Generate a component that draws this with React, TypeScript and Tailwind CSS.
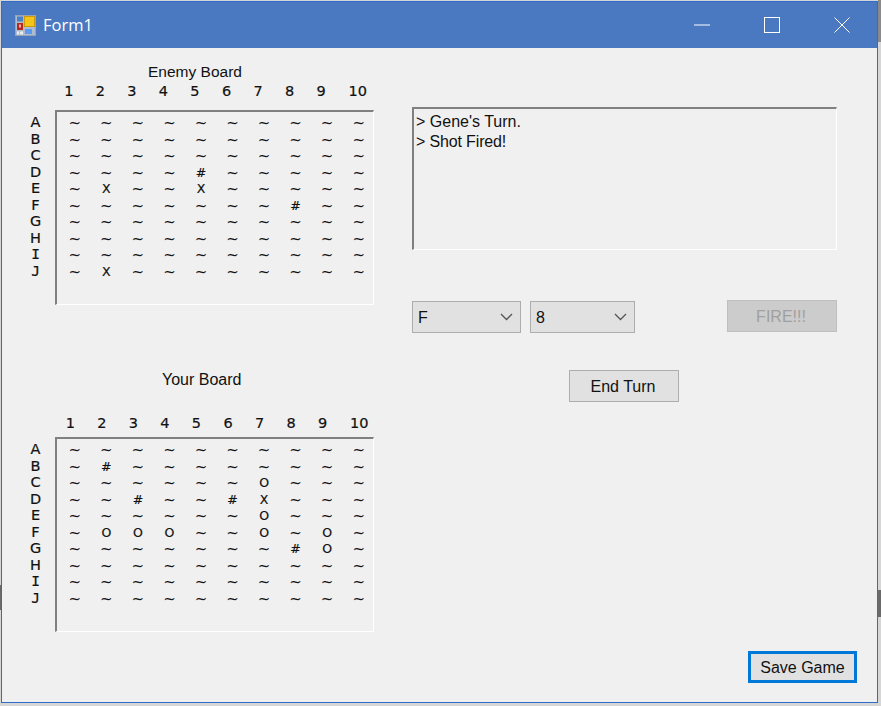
const sans = "font-['Liberation_Sans',Arial,sans-serif]";
const mono = "font-['DejaVu_Sans',Verdana,sans-serif]";
const dmono = "font-['DejaVu_Sans_Mono',monospace]";

const rowsLabels = ["A", "B", "C", "D", "E", "F", "G", "H", "I", "J"];
const colLabels = ["1", "2", "3", "4", "5", "6", "7", "8", "9", "10"];

const enemy = [
  "~~~~~~~~~~",
  "~~~~~~~~~~",
  "~~~~~~~~~~",
  "~~~~#~~~~~",
  "~X~~X~~~~~",
  "~~~~~~~#~~",
  "~~~~~~~~~~",
  "~~~~~~~~~~",
  "~~~~~~~~~~",
  "~X~~~~~~~~",
];
const yours = [
  "~~~~~~~~~~",
  "~#~~~~~~~~",
  "~~~~~~O~~~",
  "~~#~~#X~~~",
  "~~~~~~O~~~",
  "~OOO~~O~O~",
  "~~~~~~~#O~",
  "~~~~~~~~~~",
  "~~~~~~~~~~",
  "~~~~~~~~~~",
];

function Board({ data }: { data: string[] }) {
  return (
    <div className="flex">
      <div className="w-[53px] shrink-0 pt-[4px] text-[14.5px] text-[#111] [-webkit-text-stroke:0.2px_#111]">
        {rowsLabels.map((l) => (
          <div
            key={l}
            className={
              l === "I" || l === "J"
                ? `h-[16.5px] leading-[16.5px] text-center pl-[14px] ${dmono}`
                : `h-[16.5px] leading-[16.5px] text-center pl-[14px] ${mono}`
            }
          >
            {l}
          </div>
        ))}
      </div>
      <div className="w-[319px] h-[195px] border-t-2 border-l-2 border-t-[#808080] border-l-[#808080] border-r border-b border-r-white border-b-white pt-[3px] pl-[2px]">
        {data.map((row, i) => (
          <div key={i} className={`flex h-[16.5px] leading-[16.5px] text-[#111] ${mono}`}>
            {row.split("").map((c, j) => (
              <span
                key={j}
                className={
                  c === "~"
                    ? "w-[31.55px] shrink-0 text-center text-[15px]"
                    : "w-[31.55px] shrink-0 text-center text-[12.5px] [-webkit-text-stroke:0.2px_#111]"
                }
              >
                {c}
              </span>
            ))}
          </div>
        ))}
      </div>
    </div>
  );
}

function Header({ className }: { className: string }) {
  return (
    <div className={`flex h-[18px] leading-[18px] text-[14.5px] text-[#111] [-webkit-text-stroke:0.2px_#111] ${mono} ${className}`}>
      {colLabels.map((c, i) => (
        <span key={c} className={i === 9 ? "w-[31.55px] text-center pl-[10px] whitespace-nowrap" : "w-[31.55px] text-center"}>
          {c}
        </span>
      ))}
    </div>
  );
}

function Chevron() {
  return (
    <svg width="13" height="8" viewBox="0 0 13 8" fill="none" stroke="#555" strokeWidth="1.3">
      <path d="M1 1l5.5 5.5L12 1" />
    </svg>
  );
}

function Select({ value, className }: { value: string; className: string }) {
  return (
    <div className={`h-[32px] bg-[#e1e1e1] border border-[#adadad] flex items-center justify-between pl-[5px] pr-[7px] text-[16px] text-[#111] ${className}`}>
      <span className="pt-[2px]">{value}</span>
      <Chevron />
    </div>
  );
}

function AppIcon() {
  return (
    <svg width="21" height="21" viewBox="0 0 21 21" className="shrink-0">
      <rect x="0.5" y="0.5" width="20" height="20" fill="#aebccd" stroke="#98a4b4" />
      <rect x="2" y="1.5" width="6" height="5" fill="#4a80c8" />
      <rect x="2" y="8" width="6" height="7" fill="#b9281e" />
      <rect x="4" y="9.5" width="2" height="3" fill="#f0b0a0" />
      <rect x="9.5" y="1.5" width="10" height="10" fill="#f5c518" stroke="#c99a10" />
      <rect x="10" y="14" width="7" height="5" fill="#5a9af0" />
      <rect x="2" y="16.5" width="2" height="3" fill="#e8edf5" />
      <rect x="5" y="16.5" width="3" height="3" fill="#e8edf5" />
    </svg>
  );
}

export default function App() {
  return (
    <div className={`relative w-[881px] h-[706px] overflow-hidden bg-[#d6d6d6] pt-px pl-px ${sans}`}>
      <div className="absolute right-0 top-0 w-[3px] h-[42px] bg-[#8a8a8a]" />
      <div className="absolute right-0 top-[590px] w-[3px] h-[27px] bg-[#6a6a6a]" />
      <div className="absolute left-0 top-[585px] w-px h-[25px] bg-[#6a6a6a]" />
      <div className="relative flex flex-col w-[877px] h-[702px] border border-[#2f6ccb] bg-[#f0f0f0]">
        <div className="flex items-center h-[46px] bg-[#4a79c2] pl-[13px] text-white">
          <AppIcon />
          <span className="ml-[7px] text-[16.5px] font-['Open_Sans',sans-serif]">Form1</span>
          <div className="ml-auto flex">
            <div className="w-[70px] h-[46px] flex items-center justify-center">
              <svg width="16" height="2" viewBox="0 0 16 2"><rect width="16" height="1" y="0.5" fill="#fff" /></svg>
            </div>
            <div className="w-[70px] h-[46px] flex items-center justify-center">
              <svg width="16" height="16" viewBox="0 0 16 16" fill="none" stroke="#fff"><rect x="0.5" y="0.5" width="15" height="15" /></svg>
            </div>
            <div className="w-[70px] h-[46px] flex items-center justify-center">
              <svg width="16" height="16" viewBox="0 0 16 16" fill="none" stroke="#fff"><path d="M0.5 0.5l15 15M15.5 0.5l-15 15" /></svg>
            </div>
          </div>
        </div>

        <div className="flex flex-1">
          <div className="w-[410px] shrink-0 pt-[14px]">
            <div className="h-[20px] leading-[20px] text-[15.5px] text-[#111] pl-[146px]">Enemy Board</div>
            <Header className="pl-[51px]" />
            <div className="mt-[10px]">
              <Board data={enemy} />
            </div>
            <div className="mt-[65px] h-[20px] leading-[20px] text-[16px] text-[#111] pl-[160px]">Your Board</div>
            <Header className="pl-[52.5px] mt-[24px]" />
            <div className="mt-[5px]">
              <Board data={yours} />
            </div>
          </div>

          <div className="flex-1 flex flex-col pt-[59px] pr-[20px] pb-[19px]">
            <div className="w-[425px] h-[143px] border-t-2 border-l-2 border-t-[#808080] border-l-[#808080] border-r border-b border-r-white border-b-white pl-[2px] pt-[3px] text-[16px] leading-[20px] text-[#111]">
              <div>&gt; Gene's Turn.</div>
              <div className="tracking-[-0.15px]">&gt; Shot Fired!</div>
            </div>
            <div className="w-[425px] flex items-start mt-[50px]">
              <Select value="F" className="w-[109px] mt-px" />
              <Select value="8" className="w-[105px] ml-[9px] mt-px" />
              <div className="ml-auto w-[110px] h-[32px] bg-[#cccccc] border border-[#bfbfbf] flex items-center justify-center pt-[2px] pr-[2px] text-[16px] text-[#a0a0a0]">
                FIRE!!!
              </div>
            </div>
            <div className="ml-[157px] mt-[37px] w-[110px] h-[32px] bg-[#e1e1e1] border border-[#adadad] flex items-center justify-center pt-[2px] pr-[2px] text-[16px] text-[#111]">
              End Turn
            </div>
            <div className="mt-auto self-end w-[109px] h-[32px] bg-[#e1e1e1] border-[3px] border-[#0078d7] flex items-center justify-center pt-[1px] text-[16px] text-[#111]">
              Save Game
            </div>
          </div>
        </div>
      </div>
    </div>
  );
}
